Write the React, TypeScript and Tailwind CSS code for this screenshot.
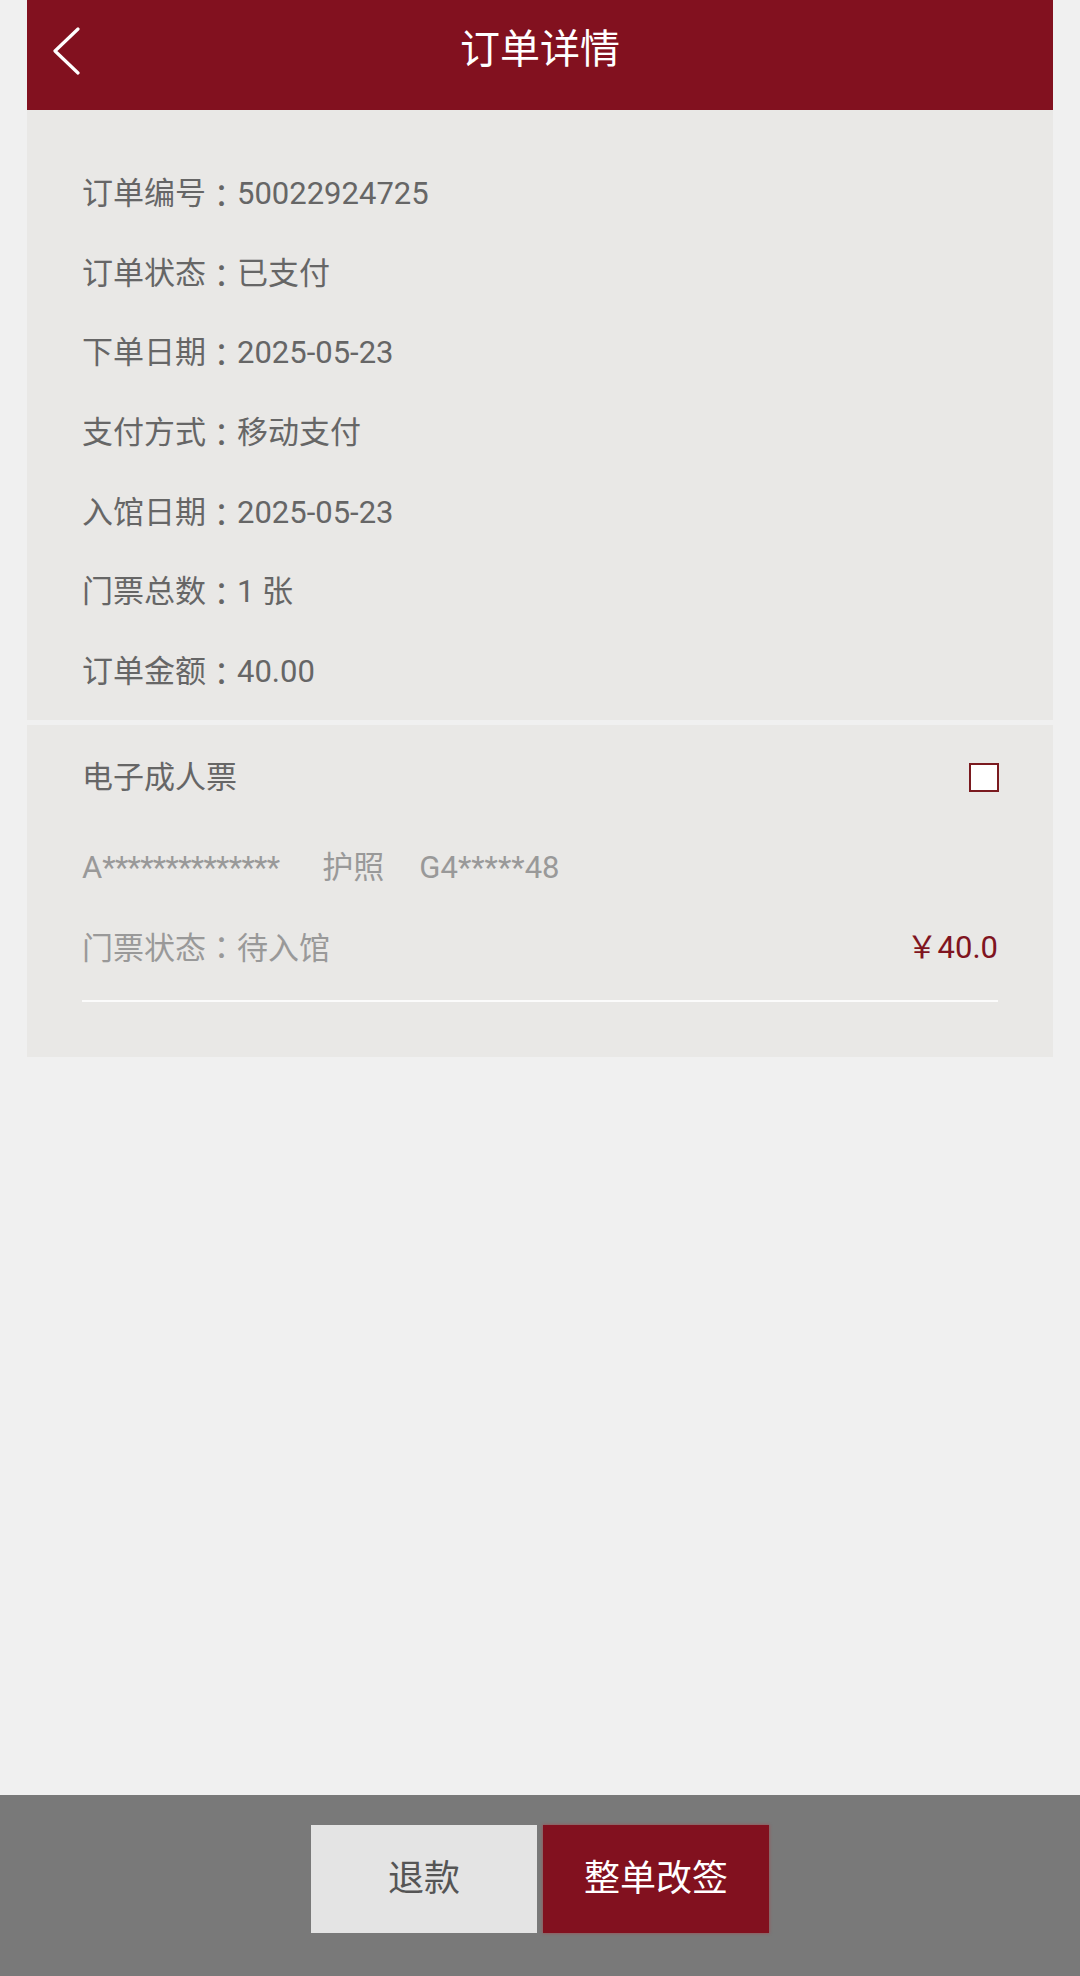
import React from "react";

const rows = [
  ["订单编号", "50022924725"],
  ["订单状态", "已支付"],
  ["下单日期", "2025-05-23"],
  ["支付方式", "移动支付"],
  ["入馆日期", "2025-05-23"],
  ["门票总数", "1 张"],
  ["订单金额", "40.00"],
];

function Colon() {
  return <span style={{ fontFamily: "'Noto Sans CJK TC', sans-serif" }}>：</span>;
}

export default function App() {
  return (
    <div
      className="h-[1976px] w-[1080px] bg-[#f0f0f0] flex flex-col"
      style={{ fontFamily: "Roboto, 'Noto Sans CJK SC', sans-serif" }}
    >
      <div className="px-[27px] flex flex-col">
        {/* Header */}
        <div className="relative h-[110px] bg-[#82111f] flex items-center justify-center">
          <svg
            className="absolute left-[25px] top-[27px]"
            width="30"
            height="48"
            viewBox="0 0 30 48"
            fill="none"
          >
            <polyline
              points="26,2 3,24 26,46"
              stroke="#ffffff"
              strokeWidth="3.2"
              strokeLinecap="round"
              strokeLinejoin="round"
            />
          </svg>
          <span className="text-white text-[40px] leading-none pb-[10px]">订单详情</span>
        </div>

        {/* Info section */}
        <div className="h-[610px] bg-[#e9e8e6] pt-[44px] px-[55px] flex flex-col">
          {rows.map(([k, v]) => (
            <div key={k} className="h-[79.6px] flex items-center text-[31px] text-[#666666] leading-none">
              <span>{k}</span>
              <Colon />
              <span>{v}</span>
            </div>
          ))}
        </div>

        {/* Ticket section */}
        <div className="mt-[5px] h-[332px] bg-[#e9e8e6] pt-[12px] px-[55px] flex flex-col">
          <div className="h-[80px] flex items-center justify-between">
            <span className="text-[31px] text-[#666666] leading-none">电子成人票</span>
            <div className="w-[30px] h-[29px] bg-white border-2 border-[#7a1a1f] mr-[-1px]" />
          </div>
          <div className="mt-[10px] h-[80px] flex items-center text-[31px] text-[#999999] leading-none">
            <span>
              A<span className="tracking-[-0.7px]">**************</span>
            </span>
            <span className="ml-[43px]">护照</span>
            <span className="ml-[35px]">G4*****48</span>
          </div>
          <div className="h-[80px] flex items-center justify-between text-[31px] leading-none">
            <span className="text-[#999999]">
              门票状态<Colon />待入馆
            </span>
            <span className="text-[#7f1420]">￥40.0</span>
          </div>
          <div className="mt-[13px] h-[2px] bg-[#fbfbfb]" />
        </div>
      </div>

      <div className="flex-1" />

      {/* Bottom bar */}
      <div className="h-[181px] bg-[#797979] flex justify-center pt-[30px] gap-[6px]">
        <button className="w-[226px] h-[108px] bg-[#e4e4e4] text-[#555555] text-[36px] leading-none flex items-center justify-center">
          退款
        </button>
        <button className="w-[226px] h-[108px] bg-[#82111f] text-white text-[36px] leading-none flex items-center justify-center shadow-[0_0_3px_rgba(200,40,50,0.6)]">
          整单改签
        </button>
      </div>
    </div>
  );
}
